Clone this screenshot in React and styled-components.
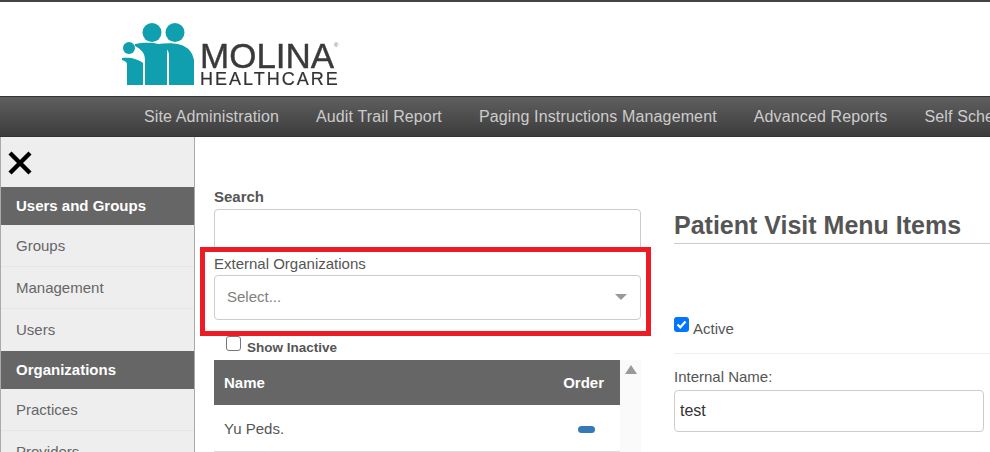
import React from "react";
import styled, { createGlobalStyle } from "styled-components";

const Global = createGlobalStyle`
  html, body { margin: 0; padding: 0; overflow: hidden; background: #fff; }
  * { box-sizing: border-box; }
  body { font-family: "Liberation Sans", Arial, sans-serif; color: #555; }
`;
const Page = styled.div`
  width: 990px; height: 452px; overflow: hidden; position: relative;
  border-top: 2px solid #444; display: flex; flex-direction: column;
`;
const Header = styled.header`
  height: 94px; flex: none; display: flex; align-items: flex-start; padding: 20px 0 0 122px; background: #fff;
`;
const Logo = styled.div` display: flex; align-items: flex-start; filter: blur(0.4px); `;
const LogoWords = styled.div` display: flex; flex-direction: column; margin: 20px 0 0 6px; position: relative; `;
const Molina = styled.span`
  font-size: 35px; line-height: 27px; height: 27px; color: #3a3a3a; white-space: nowrap; -webkit-text-stroke: 0.4px #3a3a3a;
`;
const Registered = styled.span` position: absolute; left: 134px; top: 0; font-size: 6px; line-height: 7px; color: #666; `;
const Healthcare = styled.span` font-size: 18px; line-height: 16px; margin-top: 2px; color: #333; letter-spacing: 2px; white-space: nowrap; -webkit-text-stroke: 0.2px #333; `;
const Nav = styled.nav`
  height: 41px; flex: none; display: flex; align-items: center; padding-left: 144px; gap: 37px;
  background: linear-gradient(#5f5f5f, #3c3c3c); border-top: 1px solid #333; border-bottom: 1px solid #333;
  overflow: hidden; white-space: nowrap;
`;
const NavItem = styled.a` flex: none; font-size: 16px; letter-spacing: 0.13px; color: #ccc; `;
const Body = styled.div` flex: 1; display: flex; min-height: 0; `;
const Sidebar = styled.aside`
  width: 195px; flex: none; background: #eee; border-left: 1px solid #aaa; border-right: 1px solid #aaa;
  display: flex; flex-direction: column;
`;
const CloseBtn = styled.div` height: 50px; flex: none; padding: 14px 0 0 7px; line-height: 0; `;
const SideItem = styled.div`
  flex: none; display: flex; align-items: center; padding-left: 15px; font-size: 15px;
  height: ${p => (p.$head ? 38 : 42)}px;
  padding-bottom: ${p => (p.$head ? 2 : 0)}px;
  font-weight: ${p => (p.$head ? 700 : 400)};
  color: ${p => (p.$head ? "#fff" : "#666")};
  background: ${p => (p.$head ? "#666" : "#eee")};
  border-bottom: ${p => (p.$head ? "none" : p.$last ? "2px solid #eee" : "1px solid #e6e6e6")};
`;
const Content = styled.main`
  flex: 1; min-width: 0; display: grid; grid-template-columns: 427px 1fr; column-gap: 33px; padding: 50px 0 0 19px; overflow: hidden;
`;
const LeftCol = styled.div` display: flex; flex-direction: column; `;
const BoldLabel = styled.label` font-size: 15px; font-weight: 700; line-height: 20px; color: #555; height: 22px; `;
const TextInput = styled.div`
  border: 1px solid #ccc; border-radius: 4px; background: #fff; font-size: 16px; color: #333;
  height: ${p => p.$h}px; display: flex; align-items: center; padding-left: 5px;
`;
const PlainLabel = styled.label` font-size: 15px; line-height: 20px; color: #555; `;
const OrgLabel = styled(PlainLabel)` margin-top: 3px; height: 21px; `;
const SelectBox = styled.div`
  height: 45px; border: 1px solid #ccc; border-radius: 4px; display: flex; align-items: center;
  justify-content: space-between; padding: 0 13px 0 12px; font-size: 15px; color: #808080;
`;
const SelectText = styled.span` margin-top: -2px; `;
const Caret = styled.span`
  width: 0; height: 0; border-left: 6px solid transparent; border-right: 6px solid transparent; border-top: 6px solid #999; margin-top: -2px;
`;
const InactiveRow = styled.div` height: 40px; padding: 16px 0 0 12px; display: flex; align-items: flex-start; gap: 6px; `;
const EmptyCheck = styled.span` width: 15px; height: 15px; border: 1px solid #767676; border-radius: 3px; background: #fff; flex: none; `;
const InactiveText = styled.span` font-size: 13.5px; font-weight: 700; color: #555; margin-top: 4px; `;
const TableWrap = styled.div` display: flex; `;
const Table = styled.div` width: 406px; flex: none; display: flex; flex-direction: column; `;
const Row = styled.div`
  display: flex; align-items: center; justify-content: space-between; font-size: 15px;
  height: ${p => (p.$head ? 45 : 47)}px;
  padding: 0 16px 0 10px;
  background: ${p => (p.$head ? "#666" : "#fff")};
  color: ${p => (p.$head ? "#fff" : "#555")};
  font-weight: ${p => (p.$head ? 700 : 400)};
  border-bottom: ${p => (p.$head ? "none" : "1px solid #ddd")};
`;
const Pill = styled.span` width: 17px; height: 7px; border-radius: 4px; background: #337ab7; margin-right: 9px; margin-top: 3px; `;
const ScrollTrack = styled.div` flex: 1; background: #fafafa; padding: 5px 0 0 5px; `;
const ScrollUp = styled.span`
  display: block; width: 0; height: 0; border-left: 6.5px solid transparent; border-right: 6.5px solid transparent; border-bottom: 9px solid #999;
`;
const RightCol = styled.div` display: flex; flex-direction: column; padding-top: 22px; min-width: 0; `;
const Title = styled.h2`
  margin: 0; font-size: 25px; line-height: 33px; height: 35px; font-weight: 700; color: #555; border-bottom: 1px solid #ccc; white-space: nowrap;
`;
const ActiveRow = styled.div`
  height: 110px; padding-top: 73px; border-bottom: 1px solid #eee; display: flex; align-items: flex-start; gap: 4px;
`;
const BlueCheck = styled.span`
  width: 15px; height: 15px; border-radius: 3px; background: #0075ff; flex: none; display: flex; align-items: center; justify-content: center;
`;
const ActiveText = styled.span` font-size: 15px; line-height: 16px; margin-top: 4px; color: #555; `;
const NameLabel = styled(PlainLabel)` margin-top: 13px; height: 22px; `;
const NameInput = styled(TextInput)` width: 310px; margin-top: 1px; `;
const RedFrame = styled.div`
  position: absolute; left: 200px; top: 245px; width: 451px; height: 89px; border: 5px solid #ed1c24; pointer-events: none;
`;

const navItems = ["Site Administration", "Audit Trail Report", "Paging Instructions Management", "Advanced Reports", "Self Scheduling"];

export default function App() {
  return (
    <Page>
      <Global />
      <Header>
        <Logo>
          <svg width="72" height="65" viewBox="0 0 72 65" aria-hidden="true">
            <g fill="#0f9fae">
              <circle cx="7" cy="26" r="6" />
              <circle cx="30" cy="10.5" r="9.5" />
              <circle cx="53" cy="10.5" r="9.5" />
              <path d="M0 36 C8 35 16 37 21 41 L21 63 L5 63 L5 42 C5 40 3 39 0 38 Z" />
              <path d="M13 22 C24 20 38 20 45 26 L45 63 L23 63 L23 38 C23 31 19 27 13 24 Z" />
              <path d="M36 22 C50 20 69 20 72 38 L72 63 L47 63 L47 33 C47 28 43 24 36 24 Z" />
            </g>
          </svg>
          <LogoWords>
            <Molina>MOLINA</Molina>
            <Registered>®</Registered>
            <Healthcare>HEALTHCARE</Healthcare>
          </LogoWords>
        </Logo>
      </Header>
      <Nav>
        {navItems.map(n => <NavItem key={n}>{n}</NavItem>)}
      </Nav>
      <Body>
        <Sidebar>
          <CloseBtn>
            <svg width="24" height="24" viewBox="0 0 24 24" aria-hidden="true">
              <path d="M2 2 L22 22 M22 2 L2 22" stroke="#000" strokeWidth="4.4" fill="none" />
            </svg>
          </CloseBtn>
          <SideItem $head>Users and Groups</SideItem>
          <SideItem>Groups</SideItem>
          <SideItem>Management</SideItem>
          <SideItem $last>Users</SideItem>
          <SideItem $head>Organizations</SideItem>
          <SideItem>Practices</SideItem>
          <SideItem>Providers</SideItem>
        </Sidebar>
        <Content>
          <LeftCol>
            <BoldLabel>Search</BoldLabel>
            <TextInput $h={42} />
            <OrgLabel>External Organizations</OrgLabel>
            <SelectBox><SelectText>Select...</SelectText><Caret /></SelectBox>
            <InactiveRow>
              <EmptyCheck />
              <InactiveText>Show Inactive</InactiveText>
            </InactiveRow>
            <TableWrap>
              <Table>
                <Row $head><span>Name</span><span>Order</span></Row>
                <Row><span>Yu Peds.</span><Pill /></Row>
              </Table>
              <ScrollTrack><ScrollUp /></ScrollTrack>
            </TableWrap>
          </LeftCol>
          <RightCol>
            <Title>Patient Visit Menu Items</Title>
            <ActiveRow>
              <BlueCheck>
                <svg width="11" height="11" viewBox="0 0 11 11" aria-hidden="true">
                  <path d="M1.5 5.5 L4.3 8.3 L9.5 2.5" stroke="#fff" strokeWidth="2.2" fill="none" />
                </svg>
              </BlueCheck>
              <ActiveText>Active</ActiveText>
            </ActiveRow>
            <NameLabel>Internal Name:</NameLabel>
            <NameInput $h={42}>test</NameInput>
          </RightCol>
        </Content>
      </Body>
      <RedFrame />
    </Page>
  );
}
